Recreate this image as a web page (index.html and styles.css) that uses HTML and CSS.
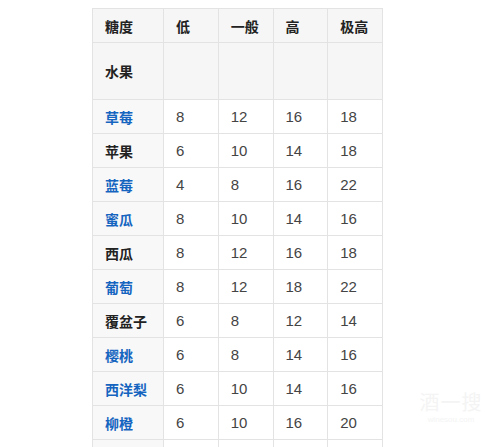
FILE: index.html
```html
<!DOCTYPE html>
<html lang="zh">
<head>
<meta charset="utf-8">
<link rel="stylesheet" href="styles.css">
</head>
<body>
<table class="sugar">
  <thead>
    <tr class="head"><th>糖度</th><th>低</th><th>一般</th><th>高</th><th>极高</th></tr>
    <tr class="group"><th>水果</th><th></th><th></th><th></th><th></th></tr>
  </thead>
  <tbody>
    <tr><th class="link">草莓</th><td>8</td><td>12</td><td>16</td><td>18</td></tr>
    <tr><th>苹果</th><td>6</td><td>10</td><td>14</td><td>18</td></tr>
    <tr><th class="link">蓝莓</th><td>4</td><td>8</td><td>16</td><td>22</td></tr>
    <tr><th class="link">蜜瓜</th><td>8</td><td>10</td><td>14</td><td>16</td></tr>
    <tr><th>西瓜</th><td>8</td><td>12</td><td>16</td><td>18</td></tr>
    <tr><th class="link">葡萄</th><td>8</td><td>12</td><td>18</td><td>22</td></tr>
    <tr><th>覆盆子</th><td>6</td><td>8</td><td>12</td><td>14</td></tr>
    <tr><th class="link">樱桃</th><td>6</td><td>8</td><td>14</td><td>16</td></tr>
    <tr><th class="link">西洋梨</th><td>6</td><td>10</td><td>14</td><td>16</td></tr>
    <tr><th class="link">柳橙</th><td>6</td><td>10</td><td>16</td><td>20</td></tr>
    <tr><th class="link">&nbsp;</th><td></td><td></td><td></td><td></td></tr>
  </tbody>
</table>
<div class="watermark">
  <div class="wm-big">酒一搜</div>
  <div class="wm-small">winesou.com</div>
</div>
</body>
</html>
```
FILE: styles.css
```css
html, body {
  margin: 0;
  padding: 0;
  background: #ffffff;
  overflow: hidden;
  height: 447px;
}
body {
  position: relative;
  font-family: "Liberation Sans", Arial, "Noto Sans CJK SC", sans-serif;
}
.sugar {
  margin: 8px 0 0 92px;
  border-collapse: collapse;
  table-layout: fixed;
  width: 291px;
  font-size: 15px;
  color: #333;
  background: #ffffff;
}
.sugar th, .sugar td {
  border: 1px solid #e3e3e3;
  padding: 0 0 0 12px;
  text-align: left;
  vertical-align: middle;
  height: 33px;
  box-sizing: border-box;
}
.sugar th {
  font-family: "Noto Sans CJK SC", "Liberation Sans", sans-serif;
  font-size: 14px;
  font-weight: 700;
  color: #222;
  background: #f8f8f8;
}
.sugar th:first-child { width: 71px; }
.sugar td { color: #444; }
.sugar .head th {
  background: #f6f6f6;
  height: 34px;
}
.sugar .group th {
  background: #f6f6f6;
  height: 57px;
}
.sugar th.link { color: #1565c0; }
.sugar tbody tr { height: 34px; }
.sugar tbody th, .sugar tbody td { height: 34px; }
.watermark {
  position: absolute;
  left: 418px;
  top: 392px;
  width: 66px;
  text-align: center;
  color: #f4f4f4;
  line-height: 1;
}
.wm-big {
  font-family: "Noto Sans CJK SC", sans-serif;
  font-size: 20px;
  letter-spacing: 1px;
}
.wm-small {
  font-size: 8px;
  margin-top: 4px;
}
```
